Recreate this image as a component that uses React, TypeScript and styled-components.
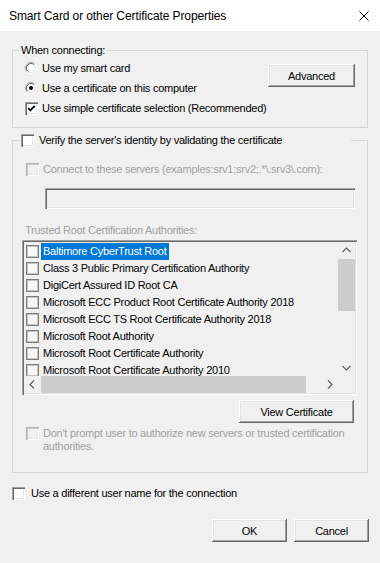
import React from "react";
import styled, { createGlobalStyle, css } from "styled-components";

const Global = createGlobalStyle`
  html, body { margin: 0; padding: 0; background: #f0f0f0; }
  body { width: 380px; height: 563px; overflow: hidden; }
  * { box-sizing: border-box; }
`;

const sunken = css`
  box-shadow: inset 1px 1px #a0a0a0, inset 2px 2px #696969, inset -1px -1px #ffffff, inset -2px -2px #e3e3e3;
`;
const sunkenDisabled = css`
  box-shadow: inset 1px 1px #b4b4b4, inset 2px 2px #c8c8c8, inset -1px -1px #ffffff, inset -2px -2px #e8e8e8;
`;

const Window = styled.div`
  width: 380px;
  height: 563px;
  background: #f0f0f0;
  display: flex;
  flex-direction: column;
  font-family: "Liberation Sans", Arial, sans-serif;
  font-size: 11px;
  letter-spacing: -0.25px;
  color: #000;
`;

const TitleBar = styled.div`
  height: 31px;
  flex: none;
  background: #fff;
  display: flex;
  align-items: center;
  justify-content: space-between;
  padding: 0 11px 0 9px;
`;

const Title = styled.span`
  font-size: 12px;
  letter-spacing: -0.1px;
  color: #000;
`;

const Body = styled.div`
  flex: 1;
  display: flex;
  flex-direction: column;
  padding: 19px 12px 0 12px;
`;

const GroupFrame = styled.section<{ $top?: number }>`
  margin-top: ${(p) => p.$top ?? 0}px;
  border: 1px solid #d5d5d5;
  display: flex;
  flex-direction: column;
`;

const Legend = styled.div<{ $left: number; $pad?: number; $width?: number }>`
  align-self: flex-start;
  margin: -8px 0 0 ${(p) => p.$left}px;
  padding: 0 ${(p) => p.$pad ?? 2}px;
  height: 14px;
  line-height: 14px;
  background: #f0f0f0;
  display: flex;
  align-items: center;
  gap: 5px;
  white-space: nowrap;
  ${(p) => p.$width && css`width: ${p.$width}px;`}
`;

const Group1Inner = styled.div`
  display: flex;
  padding: 1px 12px 9px 12px;
`;

const OptionColumn = styled.div`
  flex: 1;
  display: flex;
  flex-direction: column;
`;

const OptionRow = styled.label<{ $gap: number; $indent?: number; $disabled?: boolean }>`
  display: flex;
  align-items: center;
  height: 20px;
  gap: ${(p) => p.$gap}px;
  margin-left: ${(p) => p.$indent ?? 0}px;
  color: ${(p) => (p.$disabled ? "#a0a0a0" : "#000")};
  white-space: nowrap;
`;

const Button = styled.button<{ $w: number; $mt?: number }>`
  width: ${(p) => p.$w}px;
  height: 23px;
  margin-top: ${(p) => p.$mt ?? 0}px;
  flex: none;
  border: none;
  padding: 0;
  background: #f0f0f0;
  font-family: "Liberation Sans", Arial, sans-serif;
  font-size: 11px;
  letter-spacing: -0.25px;
  color: #000;
  box-shadow: inset -1px -1px #696969, inset 1px 1px #ffffff, inset -2px -2px #a0a0a0, inset 2px 2px #e3e3e3;
`;

type BoxVariant = "normal" | "disabled" | "flat";

const Box = styled.span<{ $variant?: BoxVariant }>`
  flex: none;
  width: 13px;
  height: 13px;
  display: inline-flex;
  align-items: center;
  justify-content: center;
  ${(p) =>
    p.$variant === "flat"
      ? css`
          background: #f7f7f7;
          box-shadow: inset 0 0 0 1px #7d7d7d, inset 0 0 0 2px #c2c2c2;
        `
      : p.$variant === "disabled"
      ? css`
          background: #f0f0f0;
          ${sunkenDisabled}
        `
      : css`
          background: #ffffff;
          ${sunken}
        `}
`;

const Group2Inner = styled.div`
  display: flex;
  flex-direction: column;
  padding: 12px 11px 19px 9px;
`;

const TextBox = styled.div`
  margin: 9px 0 0 23px;
  width: 310px;
  height: 21px;
  background: #f0f0f0;
  ${sunken}
`;

const DisabledLabel = styled.div`
  margin: 14px 0 0 3px;
  line-height: 14px;
  height: 14px;
  color: #a0a0a0;
`;

const ListBox = styled.div`
  margin-top: 3px;
  width: 335px;
  height: 155px;
  padding: 2px;
  background: #f0f0f0;
  ${sunken}
  display: grid;
  grid-template-columns: 1fr 17px;
  grid-template-rows: 1fr 17px;
`;

const Items = styled.div`
  overflow: hidden;
  padding: 1px 0 0 2px;
`;

const Item = styled.div`
  height: 17px;
  display: flex;
  align-items: center;
  gap: 2px;
  white-space: nowrap;
`;

const ItemText = styled.span<{ $selected?: boolean }>`
  padding: 0 2px;
  line-height: 17px;
  ${(p) =>
    p.$selected &&
    css`
      background: #0078d7;
      color: #fff;
    `}
`;

const VScroll = styled.div`
  display: flex;
  flex-direction: column;
  background: #f0f0f0;
`;

const HScroll = styled.div`
  display: flex;
  background: #f0f0f0;
`;

const Arrow = styled.span`
  flex: none;
  width: 17px;
  height: 17px;
  display: flex;
  align-items: center;
  justify-content: center;
`;

const Track = styled.div<{ $dir: "v" | "h" }>`
  flex: 1;
  display: flex;
  flex-direction: ${(p) => (p.$dir === "v" ? "column" : "row")};
`;

const Thumb = styled.div<{ $dir: "v" | "h"; $len: number }>`
  background: #cdcdcd;
  ${(p) =>
    p.$dir === "v"
      ? css`width: 17px; height: ${p.$len}px;`
      : css`height: 17px; width: ${p.$len}px;`}
`;

const Corner = styled.div`
  background: #f0f0f0;
`;

const RightRow = styled.div<{ $mt: number; $mr?: number; $gap?: number }>`
  display: flex;
  justify-content: flex-end;
  gap: ${(p) => p.$gap ?? 0}px;
  margin-top: ${(p) => p.$mt}px;
  margin-right: ${(p) => p.$mr ?? 0}px;
`;

const WrapRow = styled.div`
  display: flex;
  align-items: flex-start;
  gap: 4px;
  margin: 4px 0 0 4px;
  color: #a0a0a0;
  line-height: 13px;
`;

const OuterRow = styled.label`
  display: flex;
  align-items: center;
  gap: 6px;
  height: 20px;
  margin-top: 10px;
`;

const Check = () => (
  <svg width="13" height="13" viewBox="0 0 13 13">
    <polyline points="3.2,6.2 5.3,8.4 9.8,3.8" fill="none" stroke="#000" strokeWidth="1.8" />
  </svg>
);

const Radio = ({ checked }: { checked?: boolean }) => (
  <svg width="12" height="12" viewBox="0 0 12 12" style={{ flex: "none" }}>
    <circle cx="6" cy="6" r="4.5" fill="#fff" />
    <path d="M2.11 9.89 A5.5 5.5 0 0 1 9.89 2.11" fill="none" stroke="#a0a0a0" />
    <path d="M9.89 2.11 A5.5 5.5 0 0 1 2.11 9.89" fill="none" stroke="#fff" />
    <path d="M2.82 9.18 A4.5 4.5 0 0 1 9.18 2.82" fill="none" stroke="#696969" />
    <path d="M9.18 2.82 A4.5 4.5 0 0 1 2.82 9.18" fill="none" stroke="#e3e3e3" />
    {checked && <circle cx="6" cy="6" r="2" fill="#000" />}
  </svg>
);

const Chevron = ({ dir }: { dir: "up" | "down" | "left" | "right" }) => {
  const d = {
    up: "M4.5 10 L8.5 6 L12.5 10",
    down: "M4.5 7 L8.5 11 L12.5 7",
    left: "M10 4.5 L6 8.5 L10 12.5",
    right: "M7 4.5 L11 8.5 L7 12.5",
  }[dir];
  return (
    <svg width="17" height="17" viewBox="0 0 17 17">
      <path d={d} fill="none" stroke="#606060" strokeWidth="1.2" />
    </svg>
  );
};

const CloseIcon = () => (
  <svg width="10" height="10" viewBox="0 0 10 10">
    <path d="M0.5 0.5 L9.5 9.5 M9.5 0.5 L0.5 9.5" stroke="#000" strokeWidth="1" />
  </svg>
);

const certs = [
  "Baltimore CyberTrust Root",
  "Class 3 Public Primary Certification Authority",
  "DigiCert Assured ID Root CA",
  "Microsoft ECC Product Root Certificate Authority 2018",
  "Microsoft ECC TS Root Certificate Authority 2018",
  "Microsoft Root Authority",
  "Microsoft Root Certificate Authority",
  "Microsoft Root Certificate Authority 2010",
];

export default function App() {
  return (
    <>
      <Global />
      <Window>
        <TitleBar>
          <Title>Smart Card or other Certificate Properties</Title>
          <CloseIcon />
        </TitleBar>
        <Body>
          <GroupFrame>
            <Legend $left={6}>When connecting:</Legend>
            <Group1Inner>
              <OptionColumn>
                <OptionRow $gap={5}>
                  <Radio />
                  Use my smart card
                </OptionRow>
                <OptionRow $gap={5}>
                  <Radio checked />
                  Use a certificate on this computer
                </OptionRow>
                <OptionRow $gap={4}>
                  <Box>
                    <Check />
                  </Box>
                  Use simple certificate selection (Recommended)
                </OptionRow>
              </OptionColumn>
              <Button $w={87} $mt={6}>
                Advanced
              </Button>
            </Group1Inner>
          </GroupFrame>

          <GroupFrame $top={12}>
            <Legend $left={8} $pad={0} $width={330}>
              <Box />
              Verify the server's identity by validating the certificate
            </Legend>
            <Group2Inner>
              <OptionRow $gap={4} $indent={4} $disabled>
                <Box $variant="disabled" />
                Connect to these servers (examples:srv1;srv2;.*\.srv3\.com):
              </OptionRow>
              <TextBox />
              <DisabledLabel>Trusted Root Certification Authorities:</DisabledLabel>
              <ListBox>
                <Items>
                  {certs.map((c, i) => (
                    <Item key={c}>
                      <Box $variant="flat" />
                      <ItemText $selected={i === 0}>{c}</ItemText>
                    </Item>
                  ))}
                </Items>
                <VScroll>
                  <Arrow>
                    <Chevron dir="up" />
                  </Arrow>
                  <Track $dir="v">
                    <Thumb $dir="v" $len={52} />
                  </Track>
                  <Arrow>
                    <Chevron dir="down" />
                  </Arrow>
                </VScroll>
                <HScroll>
                  <Arrow>
                    <Chevron dir="left" />
                  </Arrow>
                  <Track $dir="h">
                    <Thumb $dir="h" $len={265} />
                  </Track>
                  <Arrow>
                    <Chevron dir="right" />
                  </Arrow>
                </HScroll>
                <Corner />
              </ListBox>
              <RightRow $mt={5} $mr={2}>
                <Button $w={115}>View Certificate</Button>
              </RightRow>
              <WrapRow>
                <Box $variant="disabled" />
                <span>
                  Don't prompt user to authorize new servers or trusted certification
                  <br />
                  authorities.
                </span>
              </WrapRow>
            </Group2Inner>
          </GroupFrame>

          <OuterRow>
            <Box />
            Use a different user name for the connection
          </OuterRow>
          <RightRow $mt={16} $mr={-1} $gap={7}>
            <Button $w={75}>OK</Button>
            <Button $w={75}>Cancel</Button>
          </RightRow>
        </Body>
      </Window>
    </>
  );
}
